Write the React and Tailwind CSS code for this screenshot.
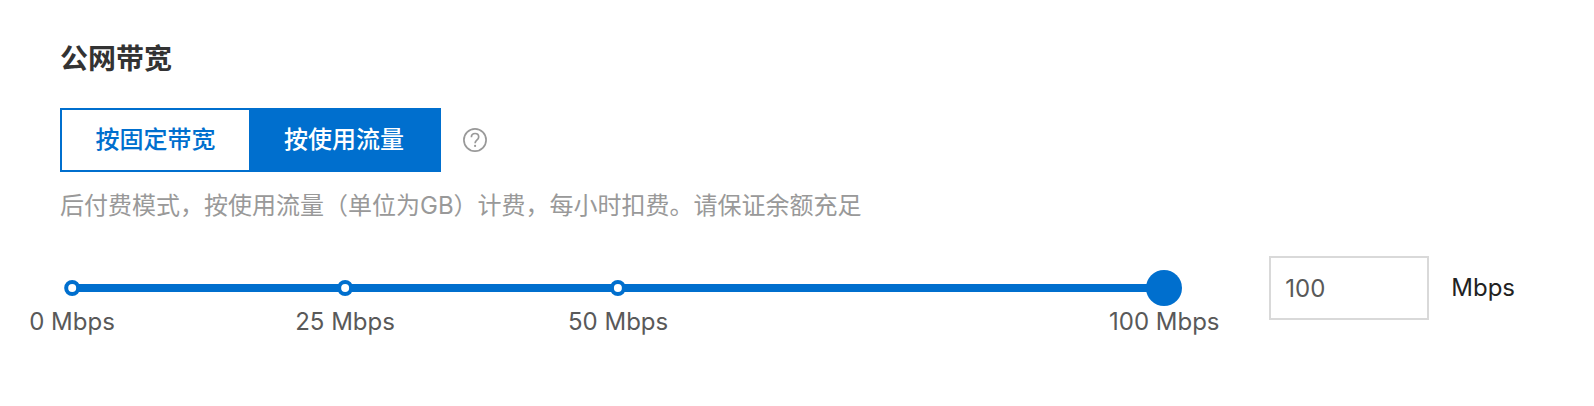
import { useState } from "react";

const MAX = 100;
const MARKS = [0, 25, 50, 100];
const MODES = ["按固定带宽", "按使用流量"];

function HelpIcon() {
  return (
    <svg viewBox="0 0 24 24" className="size-6" fill="none" stroke="currentColor" aria-hidden="true">
      <circle cx="12" cy="12" r="11.1" strokeWidth="1.7" />
      <path
        d="M8.4 9.2c0-2.2 1.5-3.7 3.7-3.7 2.1 0 3.6 1.4 3.6 3.4 0 1.4-.7 2.2-1.9 3.2-1.2 1-1.7 1.6-1.7 3.2"
        strokeWidth="1.7"
      />
      <circle cx="12.1" cy="17.9" r="1.1" fill="currentColor" stroke="none" />
    </svg>
  );
}

function ModeSwitch({ value, onChange }) {
  return (
    <div role="group" aria-label="计费模式" className="grid grid-cols-[187px_190px] border-2 border-[#006fce]">
      {MODES.map((mode) => (
        <button
          key={mode}
          type="button"
          aria-pressed={value === mode}
          onClick={() => onChange(mode)}
          className="h-[60px] cursor-pointer bg-white text-center font-medium text-[#006fce] aria-pressed:bg-[#006fce] aria-pressed:text-white"
        >
          {mode}
        </button>
      ))}
    </div>
  );
}

function BandwidthSlider({ value, onChange }) {
  return (
    <div className="relative h-16 flex-1">
      <div className="absolute inset-x-0 top-7 h-2 bg-[#dddddd]">
        <div className="h-full bg-[#006fce]" style={{ width: `${(value / MAX) * 100}%` }} />
      </div>
      {MARKS.map((mark) => (
        <div
          key={mark}
          className="absolute top-6 flex -translate-x-1/2 flex-col items-center gap-2"
          style={{ left: `${(mark / MAX) * 100}%` }}
        >
          <span className="size-4 rounded-full border-4 border-[#006fce] bg-white" />
          <span className="leading-9 whitespace-nowrap text-[#595959]">{mark} Mbps</span>
        </div>
      ))}
      <input
        type="range"
        aria-label="带宽"
        min="0"
        max={MAX}
        value={value}
        onChange={(e) => onChange(Number(e.target.value))}
        className="absolute top-3.5 -left-[18px] h-9 w-[calc(100%+36px)] cursor-pointer appearance-none bg-transparent [&::-webkit-slider-thumb]:size-9 [&::-webkit-slider-thumb]:appearance-none [&::-webkit-slider-thumb]:rounded-full [&::-webkit-slider-thumb]:bg-[#006fce]"
      />
    </div>
  );
}

export default function App() {
  const [mode, setMode] = useState(MODES[1]);
  const [bandwidth, setBandwidth] = useState(100);

  return (
    <section className="bg-white px-[60px] pt-[39px] pb-[86px] font-[Inter,'Noto_Sans_CJK_SC',sans-serif] text-[24px]">
      <h2 className="text-[28px] leading-10 font-bold text-[#333333]">公网带宽</h2>
      <div className="mt-[29px] flex items-center gap-[22px]">
        <ModeSwitch value={mode} onChange={setMode} />
        <button type="button" aria-label="帮助" className="cursor-pointer text-[#999999]">
          <HelpIcon />
        </button>
      </div>
      <p className="mt-4 leading-9 text-[#999999]">
        后付费模式，按使用流量（单位为GB）计费，每小时扣费。请保证余额充足
      </p>
      <div className="mt-8 flex items-center pr-[19px] pl-3">
        <BandwidthSlider value={bandwidth} onChange={setBandwidth} />
        <label className="ml-[105px] flex items-center gap-[22px] text-[#222222]">
          <input
            type="text"
            inputMode="numeric"
            value={bandwidth}
            onChange={(e) => setBandwidth(Math.min(MAX, Number(e.target.value) || 0))}
            className="h-16 w-40 border-2 border-[#d9d9d9] bg-white px-3.5 text-[#595959]"
          />
          Mbps
        </label>
      </div>
    </section>
  );
}
